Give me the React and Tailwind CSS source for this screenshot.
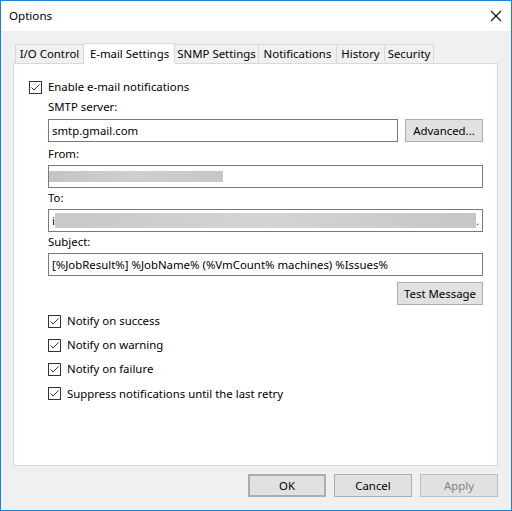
const font = { fontFamily: '"Segoe UI", "Noto Sans", sans-serif' };

function CheckBox() {
  return (
    <span className="w-[13px] h-[13px] border border-[#333333] bg-white flex items-center justify-center shrink-0">
      <svg width="11" height="11" viewBox="0 0 11 11">
        <path d="M1.5 5.5 L4 8 L9.5 2.5" fill="none" stroke="#333333" strokeWidth="1" />
      </svg>
    </span>
  );
}

function Check({ label, className = '' }) {
  return (
    <div className={`flex items-center gap-[6px] h-[16px] ${className}`}>
      <CheckBox />
      <span className="leading-[16px]">{label}</span>
    </div>
  );
}

function Field({ children, className = '' }) {
  return (
    <div className={`h-[23px] border border-[#7a7a7a] bg-white flex items-center px-[3px] ${className}`}>
      {children}
    </div>
  );
}

function Btn({ children, className = '' }) {
  return (
    <button className={`h-[23px] w-[78px] bg-[#e1e1e1] border border-[#adadad] flex items-center justify-center ${className}`}>
      {children}
    </button>
  );
}

const tabs = ['I/O Control', 'E-mail Settings', 'SNMP Settings', 'Notifications', 'History', 'Security'];
const tabWidths = [69, 93, 85, 79, 49, 50];

export default function App() {
  return (
    <div style={font} className="w-[512px] h-[511px] border border-[#1883d7] bg-[#f0f0f0] flex flex-col text-[11.4px] text-black whitespace-nowrap">
      <div className="h-[30px] bg-white flex items-center justify-between pl-[8px] pr-[9px]">
        <span className="text-[11.6px]">Options</span>
        <svg width="12" height="12" viewBox="0 0 12 12">
          <path d="M1 1 L11 11 M11 1 L1 11" stroke="#111" strokeWidth="1.1" />
        </svg>
      </div>
      <div className="flex-1 flex flex-col px-[12px] pt-[12px]">
        <div className="flex items-end ml-[2px] h-[20px] relative z-10">
          {tabs.map((t, i) =>
            i === 1 ? (
              <div key={t} style={{ width: tabWidths[i] }} className="h-[21px] -mb-[1px] bg-white border border-[#d9d9d9] border-b-0 flex items-start justify-center pt-[1px] -mx-[1px]">
                {t}
              </div>
            ) : (
              <div key={t} style={{ width: tabWidths[i] }} className="h-[19px] bg-[#f0f0f0] border border-[#d9d9d9] border-b-0 flex items-center justify-center -ml-[1px] first:ml-0">
                {t}
              </div>
            )
          )}
        </div>
        <div className="w-[485px] h-[403px] bg-white border border-[#d9d9d9] flex flex-col pl-[15px] pr-[14px]">
          <Check label="Enable e-mail notifications" className="mt-[15px]" />
          <div className="pl-[19px] flex flex-col">
            <div className="mt-[4px] leading-[16px]">SMTP server:</div>
            <div className="mt-[4px] flex gap-[7px]">
              <Field className="flex-1">smtp.gmail.com</Field>
              <Btn>Advanced...</Btn>
            </div>
            <div className="mt-[4px] leading-[16px]">From:</div>
            <Field className="mt-[3px]">
              <div className="h-[11px] w-[174px] -ml-[3px] bg-gradient-to-r from-[#c4c4c4] via-[#cfcfcf] to-[#c6c6c6]" />
            </Field>
            <div className="mt-[2px] leading-[16px]">To:</div>
            <Field className="mt-[3px]">
              <span>i</span>
              <div className="h-[15px] flex-1 bg-gradient-to-r from-[#c8c8c8] via-[#d4d4d4] to-[#c6c6c6]" />
              <span className="text-[#555]">.</span>
            </Field>
            <div className="mt-[2px] leading-[16px]">Subject:</div>
            <Field className="mt-[3px]">[%JobResult%] %JobName% (%VmCount% machines) %Issues%</Field>
            <div className="flex justify-end mt-[6px]">
              <Btn className="w-[86px]">Test Message</Btn>
            </div>
            <div className="mt-[4px] flex flex-col">
              <Check label="Notify on success" className="h-[24px]" />
              <Check label="Notify on warning" className="h-[24px]" />
              <Check label="Notify on failure" className="h-[24px]" />
              <Check label="Suppress notifications until the last retry" className="h-[25px]" />
            </div>
          </div>
        </div>
        <div className="flex justify-end gap-[8px] mt-[8px] pr-[1px]">
          <Btn className="border-2 border-[#0078d7]">OK</Btn>
          <Btn>Cancel</Btn>
          <Btn className="bg-[#cccccc] border-[#bfbfbf] text-[#838383]">Apply</Btn>
        </div>
      </div>
    </div>
  );
}
